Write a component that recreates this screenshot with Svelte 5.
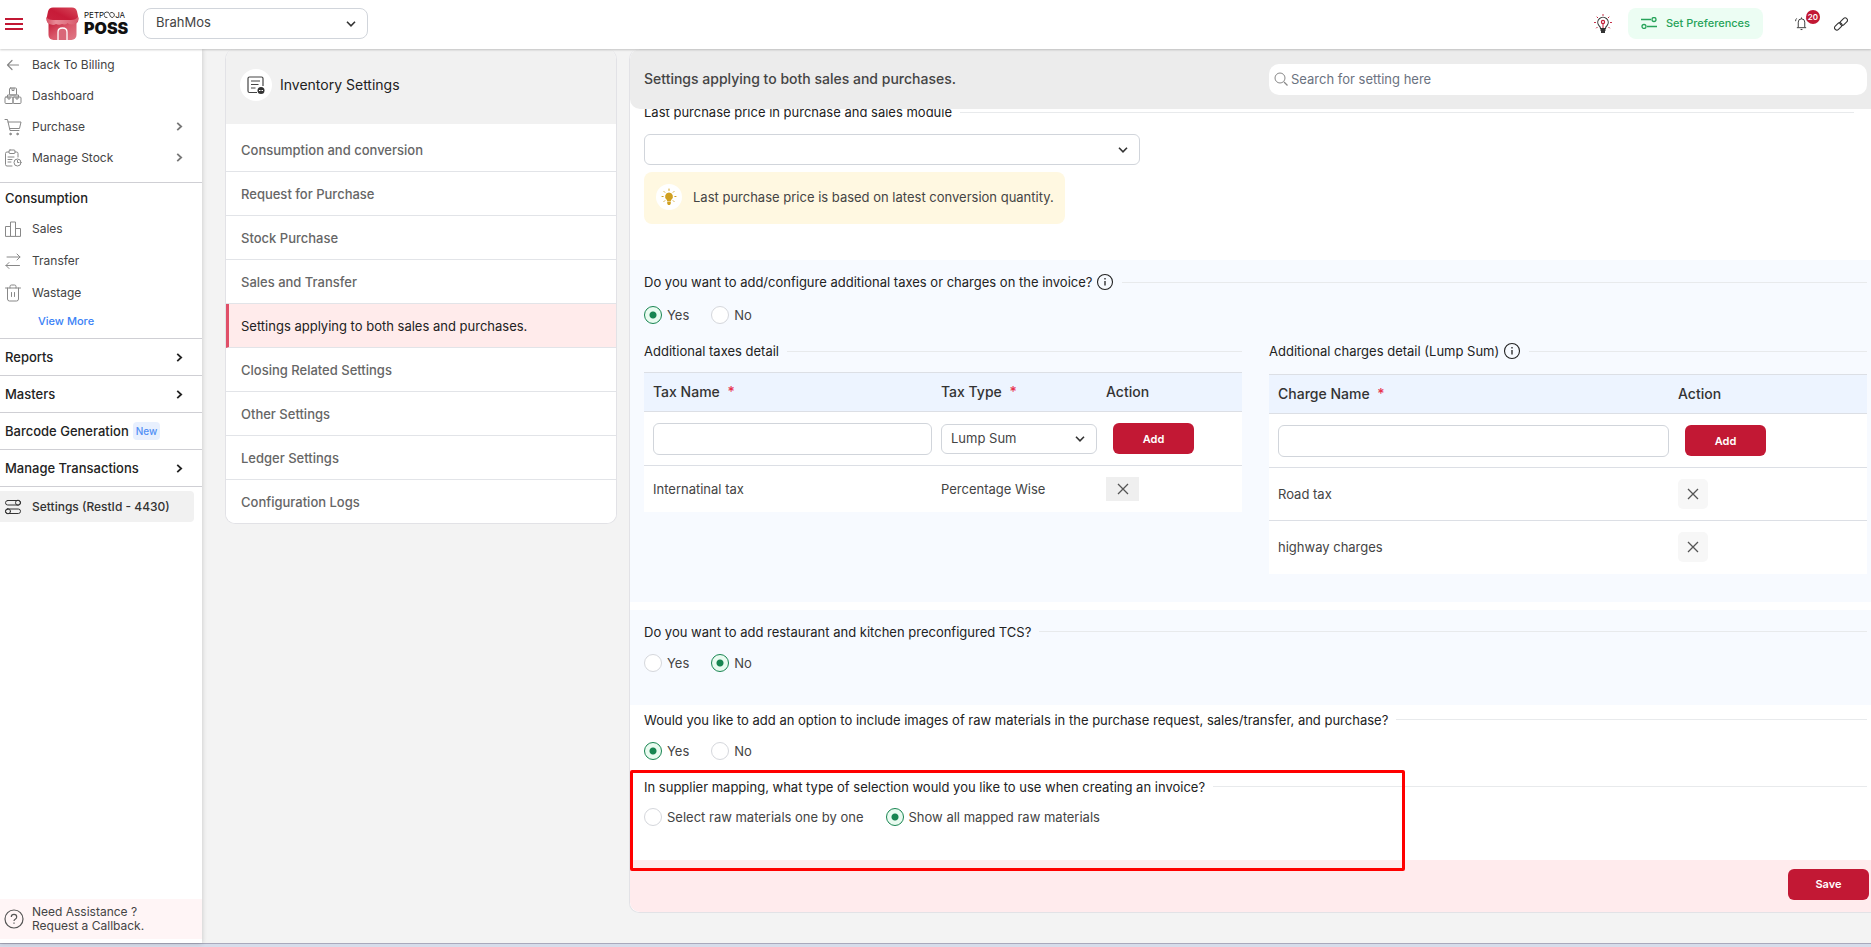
<script>
  const settingsMenu = [
    'Consumption and conversion',
    'Request for Purchase',
    'Stock Purchase',
    'Sales and Transfer',
    'Settings applying to both sales and purchases.',
    'Closing Related Settings',
    'Other Settings',
    'Ledger Settings',
    'Configuration Logs'
  ];

  const mainLinks = [
    { label: 'Back To Billing', icon: 'back' },
    { label: 'Dashboard', icon: 'dashboard' },
    { label: 'Purchase', icon: 'cart', more: true },
    { label: 'Manage Stock', icon: 'stock', more: true }
  ];

  const consumptionLinks = [
    { label: 'Sales', icon: 'sales' },
    { label: 'Transfer', icon: 'transfer' },
    { label: 'Wastage', icon: 'trash' }
  ];

  const groups = [
    { label: 'Reports', more: true },
    { label: 'Masters', more: true },
    { label: 'Barcode Generation', badge: 'New' },
    { label: 'Manage Transactions', more: true }
  ];

  let active = $state(4);
  let outlet = $state('BrahMos');
  let addTaxes = $state('Yes');
  let addTcs = $state('No');
  let addImages = $state('Yes');
  let selection = $state('Show all mapped raw materials');

  let taxName = $state('');
  let taxType = $state('Lump Sum');
  let taxes = $state([{ name: 'Internatinal tax', type: 'Percentage Wise' }]);

  let chargeName = $state('');
  let charges = $state(['Road tax', 'highway charges']);

  function addTax() {
    if (!taxName) return;
    taxes.push({ name: taxName, type: taxType });
    taxName = '';
  }

  function addCharge() {
    if (!chargeName) return;
    charges.push(chargeName);
    chargeName = '';
  }
</script>

{#snippet icon(name)}
  <svg class="icon" viewBox="0 0 18 18" fill="none" stroke="currentColor" stroke-linecap="round" stroke-linejoin="round" aria-hidden="true">
    {#if name === 'back'}
      <path d="M14.5 9H3.500M8 4.500 3.500 9l4.500 4.500" stroke-width="1.200" />
    {:else if name === 'dashboard'}
      <rect x="5.500" y="1" width="7" height="7" rx="1" /><path d="M8 1v2.500h2V1" />
      <rect x="1" y="10" width="8" height="6.500" rx="1" /><rect x="9" y="10" width="8" height="6.500" rx="1" />
      <path d="M4 10v2h2v-2M12 10v2h2v-2M3.500 10V8h11v2" />
    {:else if name === 'cart'}
      <path d="M1 1.500h2.500l2.500 11h9M4 4h13l-1.500 6.500H5.500" />
      <circle cx="6.500" cy="16" r=".8" fill="currentColor" /><circle cx="13.500" cy="16" r=".8" fill="currentColor" />
    {:else if name === 'stock'}
      <path d="M8 17H3a1.500 1.500 0 0 1-1.500-1.500v-11A1.500 1.500 0 0 1 3 3h2M11 3h1.500A1.500 1.500 0 0 1 14 4.500V8" />
      <rect x="5" y="1" width="6" height="3.500" rx="1" /><path d="M4 8h6M4 10.500h4M4 13h3" />
      <circle cx="13.500" cy="13.500" r="3.500" /><path d="M13.500 11.500v2H15" />
    {:else if name === 'sales'}
      <path d="M1.500 16V6.500h5V16zM6.500 16V2h5v14zM11.500 16V8.500h5V16z" />
    {:else if name === 'transfer'}
      <path d="M3 5h13M13 2l3 3-3 3M15.500 13.500H2M5 10.500l-3 3 3 3" />
    {:else if name === 'trash'}
      <path d="M1.500 4h15M6 4V2.500A1.500 1.500 0 0 1 7.500 1h3A1.500 1.500 0 0 1 12 2.500V4M3.500 4v11A2 2 0 0 0 5.500 17h7a2 2 0 0 0 2-2V4M7.500 8.500v4M10.500 8.500v4" />
    {:else if name === 'sliders'}
      <rect x="1.500" y="2.500" width="15" height="4.500" rx="2.200" /><circle cx="14" cy="4.700" r="2.500" />
      <rect x="1.500" y="11" width="15" height="4.500" rx="2.200" /><circle cx="4" cy="13.300" r="2.500" />
    {/if}
  </svg>
{/snippet}

{#snippet chevronRight()}
  <svg class="chev-right" viewBox="0 0 8 8" fill="none" stroke="currentColor" stroke-width="1.6" aria-hidden="true"><path d="M2 .8 5.500 4 2 7.200" /></svg>
{/snippet}

{#snippet chevronDown()}
  <svg class="chev-down" viewBox="0 0 10 6" fill="none" stroke="currentColor" stroke-width="1.600" aria-hidden="true"><path d="m1 .8 4 4 4-4" /></svg>
{/snippet}

{#snippet info()}
  <svg class="info" viewBox="0 0 18 18" fill="none" stroke="currentColor" aria-hidden="true">
    <circle cx="9" cy="9" r="7.500" stroke-width="1.100" /><path d="M9 8v4.500M9 5v1.500" stroke-width="1.300" />
  </svg>
{/snippet}

{#snippet cross()}
  <svg class="cross" viewBox="0 0 12 12" fill="none" stroke="currentColor" stroke-width="1.300" aria-hidden="true"><path d="m1 1 10 10M11 1 1 11" /></svg>
{/snippet}

<div class="app">
  <header class="topbar">
    <button class="burger" aria-label="Menu"><span></span><span></span><span></span></button>
    <a class="logo" href="#home">
      <svg class="logo-mark" viewBox="0 0 33 33" aria-hidden="true">
        <defs>
          <linearGradient id="roof" x1="1" y1="0" x2="0" y2="1">
            <stop offset="0" stop-color="#d84a5c" /><stop offset=".5" stop-color="#c71b38" /><stop offset="1" stop-color="#cb2440" />
          </linearGradient>
          <linearGradient id="wall" x1="0" y1="0" x2="1" y2="1">
            <stop offset="0" stop-color="#c31835" /><stop offset=".5" stop-color="#d9586a" /><stop offset="1" stop-color="#e07a88" />
          </linearGradient>
          <linearGradient id="brim" x1="0" y1="0" x2="1" y2="0">
            <stop offset="0" stop-color="#d65467" /><stop offset=".3" stop-color="#e88c98" /><stop offset="1" stop-color="#d85a6c" />
          </linearGradient>
        </defs>
        <path fill="url(#wall)" d="M2.500 14h28v14a5 5 0 0 1-5 5h-18a5 5 0 0 1-5-5z" />
        <path fill="url(#roof)" d="M7 .5h19q4 0 5 4l1.500 7q0 5-5 5.500H5.500Q.5 16.500.5 11.500L2 4.500q1-4 5-4z" />
        <path fill="url(#brim)" d="M.5 10q1.500 3 6.500 3h18q5 0 7-3.500 1.500 7-5 8-4 0-5.500-1-2.500 1.500-5.500.5-3 1.500-6 0-2.500 1.500-5 .500Q0 17 .5 10z" />
        <path fill="#d96778" stroke="#fff" stroke-width="1.300" d="M12 33v-8q0-4 4.500-4t4.500 4v8" />
      </svg>
      <span class="logo-text">
        <span class="logo-small">PETP<svg viewBox="0 0 13 9" fill="none" stroke="#222" stroke-width="1" aria-hidden="true"><path d="M4 7.500A3.300 3.300 0 1 1 6.500 3.500Q7 7 9.500 7.500A3 3 0 1 0 7 2.500" /></svg>JA</span>
        <span class="logo-big">POSS</span>
      </span>
    </a>
    <div class="select outlet">
      <select aria-label="Outlet" bind:value={outlet}><option>BrahMos</option></select>
      {@render chevronDown()}
    </div>
    <div class="top-actions">
      <button class="plain" aria-label="Ideas">
        <svg class="idea" viewBox="0 0 18 20" fill="none" aria-hidden="true">
          <path d="M6.500 14.500q0-1.500-1.500-2.800a5.200 5.200 0 1 1 8 0q-1.500 1.300-1.500 2.800z" stroke="#333" stroke-width="1.100" />
          <path d="M6.500 16h5M7 18h4" stroke="#333" stroke-width="2" />
          <path d="M9 14V9.500" stroke="#c21c37" /><circle cx="9" cy="8" r="1.600" stroke="#c21c37" stroke-width="1.200" />
          <path d="M9 .5v1M3 3l.7.7M15 3l-.7.7M.5 8.500h1M16.500 8.500h1M2.500 14l.7-.7M15.500 14l-.7-.7" stroke="#c21c37" stroke-linecap="round" />
        </svg>
      </button>
      <button class="preferences">
        <svg viewBox="0 0 16 12" fill="none" stroke="currentColor" stroke-width="1.300" aria-hidden="true">
          <path d="M0 2.500h10M6 9.500h10" /><circle cx="13" cy="2.500" r="2" /><circle cx="3" cy="9.500" r="2" />
        </svg>
        Set Preferences
      </button>
      <button class="plain bell" aria-label="Notifications">
        <svg viewBox="0 0 14 16" fill="none" stroke="#333" aria-hidden="true">
          <path d="M2 12.500h10M3.500 12V6.500a3.500 3.500 0 0 1 7 0V12M6 14.500h2M7 1.500V3M1.800 2.500Q.7 3.500.6 5.500M12.200 2.500q1.100 1 1.200 3" />
        </svg>
        <span class="count">20</span>
      </button>
      <button class="plain" aria-label="Links">
        <svg class="link" viewBox="0 0 14 14" fill="none" stroke="#333" stroke-width="1.100" aria-hidden="true">
          <rect x="5.500" y="2.300" width="8.500" height="4.600" rx="2.300" transform="rotate(-45 9.700 4.600)" />
          <rect x="0" y="7.100" width="8.500" height="4.600" rx="2.300" transform="rotate(-45 4.300 9.400)" />
        </svg>
      </button>
    </div>
  </header>

  <div class="body">
    <nav class="sidebar">
      <div class="nav-block main-links">
        {#each mainLinks as link}
          <a class="nav-link" href="#{link.icon}">
            {@render icon(link.icon)}<span>{link.label}</span>
            {#if link.more}{@render chevronRight()}{/if}
          </a>
        {/each}
      </div>
      <div class="nav-block">
        <h3 class="nav-title">Consumption</h3>
        {#each consumptionLinks as link}
          <a class="nav-link" href="#{link.icon}">{@render icon(link.icon)}<span>{link.label}</span></a>
        {/each}
        <a class="view-more" href="#more">View More</a>
      </div>
      {#each groups as group}
        <a class="nav-group" href="#group">
          <span>{group.label}</span>
          {#if group.badge}<span class="new">{group.badge}</span>{/if}
          {#if group.more}{@render chevronRight()}{/if}
        </a>
      {/each}
      <a class="nav-settings" href="#settings">{@render icon('sliders')}<span>Settings (RestId - 4430)</span></a>
      <a class="assist" href="#help">
        <svg viewBox="0 0 20 20" fill="none" stroke="currentColor" stroke-width="1.200" aria-hidden="true">
          <circle cx="10" cy="10" r="9" /><path d="M7.300 8q0-2.600 2.700-2.600T12.700 8q0 1.300-1.500 2.200-1.200.7-1.200 1.800M10 13.500v1.300" />
        </svg>
        <span>Need Assistance ?<br />Request a Callback.</span>
      </a>
    </nav>

    <main class="content">
      <aside class="menu-card">
        <h2 class="menu-head">
          <span class="menu-icon">
            <svg viewBox="0 0 18 18" fill="none" stroke="#444" stroke-width="1.200" aria-hidden="true">
              <path d="M10 16.500H2.500a1.500 1.500 0 0 1-1.500-1.500V2.500A1.500 1.500 0 0 1 2.500 1h12A1.500 1.500 0 0 1 16 2.500V10M4 5h9M4 8.500h7.500M4 12h4.500" />
              <circle cx="14" cy="14.500" r="3.500" fill="#333" stroke="none" />
              <path d="M12 14.500h4" stroke="#fff" stroke-width="1" stroke-dasharray="1 .5" />
            </svg>
          </span>
          Inventory Settings
        </h2>
        <div class="menu-list">
          {#each settingsMenu as item, i}
            <button class="menu-item" class:active={active === i} onclick={() => (active = i)}>{item}</button>
          {/each}
        </div>
      </aside>

      <section class="panel">
        <div class="panel-head">
          <h1>Settings applying to both sales and purchases.</h1>
          <label class="search">
            <svg viewBox="0 0 14 14" fill="none" stroke="currentColor" aria-hidden="true"><circle cx="6" cy="6" r="5" /><path d="m10 10 3.500 3.500" stroke-width="1.300" /></svg>
            <input type="text" placeholder="Search for setting here" aria-label="Search for setting here" />
          </label>
        </div>

        <div class="block price">
          <label class="legend short" for="last-price">Last purchase price in purchase and sales module</label>
          <div class="select price-select">
            <select id="last-price"><option></option></select>
            {@render chevronDown()}
          </div>
          <p class="hint">
            <span class="hint-icon">
              <svg viewBox="0 0 16 18" fill="#d0a021" stroke="#d0a021" stroke-linecap="round" aria-hidden="true">
                <path stroke="none" d="M8 4.500a4 4 0 0 1 2.300 7.200l-.5 1.300H6.200l-.5-1.300A4 4 0 0 1 8 4.500zM6.200 13.500h3.600v2l-.8 1.500H7l-.8-1.500z" />
                <path d="M8 1v1.500M3 3.500l.8.8M13 3.500l-.8.8M1 8.500h1.200M13.800 8.500H15M3 13.500l.8-.8M13 13.500l-.8-.8" />
              </svg>
            </span>
            Last purchase price is based on latest conversion quantity.
          </p>
        </div>

        <div class="block blue taxes">
          <div class="legend">Do you want to add/configure additional taxes or charges on the invoice? {@render info()}</div>
          <div class="radios">
            <label><input type="radio" value="Yes" bind:group={addTaxes} />Yes</label>
            <label><input type="radio" value="No" bind:group={addTaxes} />No</label>
          </div>
          <div class="tables">
            <div>
              <div class="legend">Additional taxes detail</div>
              <table class="tax-table">
                <thead>
                  <tr><th class="c-name">Tax Name <i>*</i></th><th class="c-type">Tax Type <i>*</i></th><th>Action</th></tr>
                </thead>
                <tbody>
                  <tr class="entry">
                    <td><input class="field" type="text" aria-label="Tax Name" bind:value={taxName} /></td>
                    <td>
                      <div class="select small">
                        <select aria-label="Tax Type" bind:value={taxType}><option>Lump Sum</option><option>Percentage Wise</option></select>
                        {@render chevronDown()}
                      </div>
                    </td>
                    <td><button class="red add" onclick={addTax}>Add</button></td>
                  </tr>
                  {#each taxes as tax, i}
                    <tr>
                      <td>{tax.name}</td><td>{tax.type}</td>
                      <td><button class="remove flat" aria-label="Remove {tax.name}" onclick={() => taxes.splice(i, 1)}>{@render cross()}</button></td>
                    </tr>
                  {/each}
                </tbody>
              </table>
            </div>
            <div>
              <div class="legend">Additional charges detail (Lump Sum) {@render info()}</div>
              <table class="charge-table">
                <thead>
                  <tr><th class="c-charge">Charge Name <i>*</i></th><th>Action</th></tr>
                </thead>
                <tbody>
                  <tr class="entry">
                    <td><input class="field" type="text" aria-label="Charge Name" bind:value={chargeName} /></td>
                    <td><button class="red add" onclick={addCharge}>Add</button></td>
                  </tr>
                  {#each charges as charge, i}
                    <tr>
                      <td>{charge}</td>
                      <td><button class="remove" aria-label="Remove {charge}" onclick={() => charges.splice(i, 1)}>{@render cross()}</button></td>
                    </tr>
                  {/each}
                </tbody>
              </table>
            </div>
          </div>
        </div>

        <div class="block blue tcs">
          <div class="legend">Do you want to add restaurant and kitchen preconfigured TCS?</div>
          <div class="radios">
            <label><input type="radio" value="Yes" bind:group={addTcs} />Yes</label>
            <label><input type="radio" value="No" bind:group={addTcs} />No</label>
          </div>
        </div>

        <div class="block images">
          <div class="legend">Would you like to add an option to include images of raw materials in the purchase request, sales/transfer, and purchase?</div>
          <div class="radios">
            <label><input type="radio" value="Yes" bind:group={addImages} />Yes</label>
            <label><input type="radio" value="No" bind:group={addImages} />No</label>
          </div>
        </div>

        <div class="block supplier">
          <div class="legend">In supplier mapping, what type of selection would you like to use when creating an invoice?</div>
          <div class="radios">
            <label><input type="radio" value="Select raw materials one by one" bind:group={selection} />Select raw materials one by one</label>
            <label><input type="radio" value="Show all mapped raw materials" bind:group={selection} />Show all mapped raw materials</label>
          </div>
          <div class="highlight"></div>
        </div>

        <footer class="panel-foot"><button class="red save">Save</button></footer>
      </section>
    </main>
  </div>
  <div class="edge"></div>
</div>

<style>
  :global(body){margin:0;background:#f3f3f3}
  .app{display:flex;flex-direction:column;min-height:100vh;font-family:Inter,"Liberation Sans",sans-serif;font-size:13px;line-height:20px;color:#444}
  .app *{box-sizing:border-box}
  h1,h2,h3,p{margin:0;font-weight:400}
  a{color:inherit;text-decoration:none}
  button,input,select{font:inherit;color:inherit;margin:0}
  button{cursor:pointer;border:0;padding:0}
  svg{flex:none;display:block}

  /* top bar */
  .topbar{display:flex;align-items:center;height:49px;padding:0 23px 2px 5px;background:#fff;box-shadow:0 1px 2px rgba(0,0,0,.2);position:relative;z-index:3}
  .burger{display:flex;flex-direction:column;gap:3px;width:18px;background:none}
  .burger span{height:2px;background:#c21834}
  .logo{display:flex;align-items:center;gap:5px;width:97px;margin-left:23px}
  .logo-mark{width:33px;height:33px}
  .logo-text{display:flex;flex-direction:column;gap:1px;color:#111}
  .logo-small{display:flex;align-items:center;font-size:8px;line-height:8px}
  .logo-small svg{width:11px;height:8px}
  .logo-big{font-size:16px;line-height:17px;font-weight:900}
  .select{position:relative}
  .select select{appearance:none;width:100%;height:100%;padding:0 24px 2px 12px;background:#fff;border:1px solid #d1d5db;border-radius:6px}
  .chev-down{position:absolute;right:12px;top:calc(50% - 3px);width:10px;height:6px;color:#333;pointer-events:none}
  .outlet{width:225px;height:31px}
  .outlet select{border-radius:8px;padding-bottom:4px}
  .top-actions{display:flex;align-items:center;margin-left:auto}
  .plain{background:none}
  .idea{width:18px;height:20px}
  .preferences{display:flex;align-items:center;gap:9px;height:31px;margin:0 32px 0 16px;padding:0 13px 2px;border-radius:8px;background:#ecfdf3;color:#27a35a;font-size:11px;font-weight:500}
  .preferences svg{width:16px;height:12px}
  .bell{position:relative;margin-right:26px}
  .bell svg{width:13px;height:15px}
  .count{position:absolute;left:11px;top:-6px;width:14px;height:14px;border-radius:50%;background:#c21834;color:#fff;font-size:8px;line-height:14px;font-weight:600;text-align:center}
  .link{width:14px;height:14px}

  /* left navigation */
  .body{flex:1;display:flex}
  .sidebar{flex:none;display:flex;flex-direction:column;width:202px;background:#fff;box-shadow:0 0 5px rgba(0,0,0,.2);z-index:2}
  .nav-block{border-bottom:1px solid #cfcfd4}
  .nav-link{display:flex;align-items:center;gap:10px;height:32px;padding:0 18px 0 4px;font-size:12px}
  .main-links{padding-bottom:9px}
  .main-links .nav-link{height:31px}
  .icon{width:18px;height:18px;color:#888}
  .nav-link .chev-right{margin-left:auto;color:#777}
  .chev-right{width:9px;height:9px}
  .nav-title{padding:5px;font-size:13px;font-weight:500;color:#222}
  .view-more{display:block;padding:2px 0 7px 38px;font-size:11px;font-weight:500;color:#3b82f6}
  .nav-group{display:flex;align-items:center;height:37px;padding:0 18px 0 5px;border-bottom:1px solid #cfcfd4;font-weight:500;color:#222}
  .nav-group .chev-right{margin-left:auto}
  .new{margin-left:4px;padding:0 3px;border-radius:4px;background:#e8f0fe;color:#5290f5;font-size:10px;line-height:18px}
  .nav-settings{display:flex;align-items:center;gap:10px;height:31px;margin:4px 8px 0 0;padding-left:4px;border-radius:0 4px 4px 0;background:#f1f1f1;font-size:12px;font-weight:500;color:#333}
  .nav-settings .icon{color:#333}
  .assist{display:flex;align-items:center;gap:8px;height:40px;margin:auto 0 4px;padding-left:4px;background:#fff5f6;font-size:12px;line-height:14px}
  .assist svg{width:20px;height:20px;color:#555}

  /* settings menu */
  .content{flex:1;display:flex;align-items:flex-start;gap:12px;min-width:0;padding:0 0 30px 23px}
  .menu-card{flex:none;width:392px;border:1px solid #e2e2e6;border-top:0;border-radius:10px;overflow:hidden;background:#fff}
  .menu-head{display:flex;align-items:center;gap:8px;height:75px;padding:0 14px 4px;background:#f1f1f1;font-size:14px;font-weight:400;color:#222}
  .menu-icon{display:grid;place-items:center;width:32px;height:32px;border-radius:50%;background:#fff}
  .menu-icon svg{width:18px;height:18px}
  .menu-list{padding-top:4px}
  .menu-item{display:block;width:100%;height:44px;padding:0 15px;border-bottom:1px solid #e2e4e8;background:#fff;color:#666;font-weight:500;text-align:left}
  .menu-item:last-child{height:43px;border-bottom:0}
  .menu-item.active{padding-left:12px;border-left:3px solid #e04f68;background:#ffebeb;color:#222;font-weight:400}

  /* settings panel */
  .panel{flex:1;min-width:0;border:solid #e2e2e6;border-width:0 0 1px 1px;border-radius:10px 0 0 10px;background:#fff}
  .panel-head{position:relative;z-index:1;display:grid;grid-template-columns:1fr 1fr;gap:27px;align-items:center;height:60px;padding:0 4px 0 14px;border-radius:10px 0 0 10px;background:#ececec}
  .panel-head h1{font-size:14px;font-weight:500}
  .search{display:flex;align-items:center;gap:3px;height:31px;padding:0 5px;border-radius:10px;background:#fff}
  .search svg{width:14px;height:14px;color:#888}
  .search input{flex:1;border:0;outline:0;padding:0;background:none}
  .search input::placeholder{color:#6b7280;opacity:1}
  .block{padding:0 4px 0 14px}
  .blue{background:#f7faff}
  .legend{display:flex;align-items:center;gap:4px;color:#222}
  .legend::after{content:"";flex:1;height:1px;margin-left:4px;background:#e8eaec}
  .short{padding-right:13px}
  .info{width:18px;height:18px}
  .price{margin-top:-7px;padding-bottom:36px}
  .price-select{width:496px;height:31px;margin:12px 0 7px}
  .hint{display:flex;align-items:center;gap:11px;width:fit-content;height:52px;padding:0 11px 2px 12px;border-radius:8px;background:#fff8e1}
  .hint-icon{display:grid;place-items:center;width:26px;height:26px;border-radius:50%;background:#fff}
  .hint-icon svg{width:16px;height:18px}
  .taxes{padding-top:12px;padding-bottom:28px}
  .tables{display:grid;grid-template-columns:1fr 1fr;gap:27px;align-items:start}
  .radios{display:flex;gap:22px}
  .radios label{display:flex;align-items:center;gap:5px}
  .radios input{appearance:none;width:18px;height:18px;border:1px solid #d5d7dc;border-radius:50%;background:#fff}
  .radios input:checked{border-color:#188551;background:radial-gradient(circle,#188551 0 3px,#e9fbf0 4px)}
  .taxes .radios{padding:13px 0 16px}
  .tcs{margin-top:8px;padding-top:12px;padding-bottom:32px}
  .tcs .radios,.images .radios{padding-top:11px}
  .images{padding-top:5px;padding-bottom:16px}
  .supplier{position:relative;padding-bottom:33px}
  .supplier .radios{padding-top:10px}
  .highlight{position:absolute;left:0;top:-7px;bottom:-11px;width:775px;border:3px solid #f00;border-radius:2px;pointer-events:none}

  table{width:100%;margin-top:11px;border-collapse:collapse;table-layout:fixed;background:#fff}
  .charge-table{margin-top:13px}
  th,td{padding:0 9px;text-align:left}
  th{height:39px;border:solid #dcdfe5;border-width:1px 0;background:#edf4ff;font-size:14px;font-weight:500;color:#333}
  th i{margin-left:4px;color:#e8334f;font-style:normal}
  td{height:53px}
  .entry td{height:54px;padding-right:0;border-bottom:1px solid #dcdfe5}
  .tax-table tr:last-child td{height:46px}
  .charge-table td{border-bottom:1px solid #dcdfe5}
  .charge-table tr:last-child td{border-bottom:0}
  .c-name{width:288px}
  .c-type{width:165px}
  .c-charge{width:400px}
  .field{display:block;width:100%;height:32px;padding:0 10px;border:1px solid #d1d5db;border-radius:6px;background:#fff}
  .small{height:30px}
  .small select{padding-left:9px}
  .red{height:31px;border-radius:6px;background:#c21834;color:#fff;font-size:11px;font-weight:600}
  .add{display:block;width:81px;margin-left:7px}
  .remove{display:grid;place-items:center;width:30px;height:30px;border-radius:5px;background:#f7f7f7;color:#555}
  .remove.flat{width:33px;height:24px;border-radius:0;background:#efefef}
  .cross{width:12px;height:12px}
  .panel-foot{display:flex;justify-content:flex-end;padding:9px 2px 12px;background:#ffebed;border-radius:0 0 0 10px}
  .save{width:81px}
  .edge{height:4px;border-top:1px solid #a9a9bc;background:#d6dcea}
</style>
